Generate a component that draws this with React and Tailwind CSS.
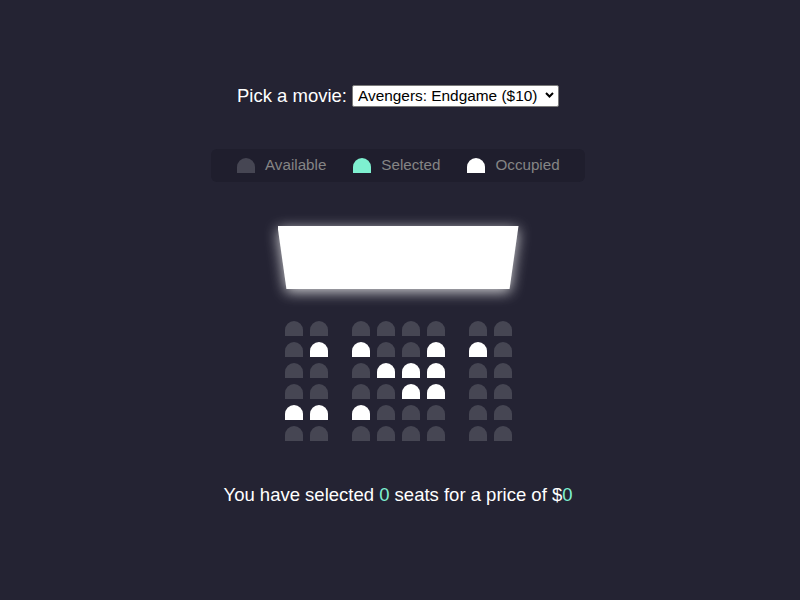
import { useState } from "react";

const occupied = [
  [],
  [1, 2, 5, 6],
  [3, 4, 5],
  [4, 5],
  [0, 1, 2],
  [],
];

function Seat({ state }) {
  const color =
    state === "occupied" ? "bg-white" : state === "selected" ? "bg-[#7ef0d0]" : "bg-[#464653]";
  return <div className={`h-[15px] w-[18px] rounded-t-[10px] ${color}`} />;
}

function SeatRow({ taken }) {
  const cols = [0, 1, 2, 3, 4, 5, 6, 7];
  const seat = (i) => <Seat key={i} state={taken.includes(i) ? "occupied" : "available"} />;
  return (
    <div className="flex gap-[24px]">
      <div className="flex gap-[7px]">{cols.slice(0, 2).map(seat)}</div>
      <div className="flex gap-[7px]">{cols.slice(2, 6).map(seat)}</div>
      <div className="flex gap-[7px]">{cols.slice(6, 8).map(seat)}</div>
    </div>
  );
}

export default function App() {
  const [movie, setMovie] = useState("10");

  return (
    <div className="flex min-h-[600px] flex-col items-center bg-[#242333] pr-[4px] pt-[85px] font-['Liberation_Sans',Arial,sans-serif] text-white">
      <div className="flex h-[22px] items-center gap-[5px]">
        <label className="text-[18.5px] leading-[22px]">Pick a movie:</label>
        <div className="relative">
          <select
            value={movie}
            onChange={(e) => setMovie(e.target.value)}
            className="h-[22px] w-[207px] appearance-none rounded-[2px] border border-[#7a7a7a] bg-white pl-[5px] text-[15.4px] leading-[20px] text-black outline-none"
          >
            <option value="10">Avengers: Endgame ($10)</option>
            <option value="12">Joker ($12)</option>
            <option value="8">Toy Story 4 ($8)</option>
            <option value="9">The Lion King ($9)</option>
          </select>
          <svg
            className="pointer-events-none absolute right-[5px] top-[8px]"
            width="9"
            height="6"
            viewBox="0 0 9 6"
            fill="none"
          >
            <path d="M1 1l3.5 3.5L8 1" stroke="#000" strokeWidth="2" />
          </svg>
        </div>
      </div>

      <ul className="mt-[42px] flex h-[33px] w-[374px] items-center gap-[27px] rounded-[6px] bg-[#1f1e2d] px-[26px] text-[15.2px] text-[#858585]">
        <li className="flex items-center gap-[10px]">
          <Seat state="available" />
          <small className="text-[15.2px]">Available</small>
        </li>
        <li className="flex items-center gap-[10px]">
          <Seat state="selected" />
          <small className="text-[15.2px]">Selected</small>
        </li>
        <li className="flex items-center gap-[10px]">
          <Seat state="occupied" />
          <small className="text-[15.2px]">Occupied</small>
        </li>
      </ul>

      <div className="mt-[44px] drop-shadow-[0_3px_7px_rgba(255,255,255,0.8)]">
        <div className="h-[63px] w-[241px] bg-white [clip-path:polygon(0_0,100%_0,96.3%_100%,3.7%_100%)]" />
      </div>

      <div className="mt-[32px] flex flex-col gap-[6px]">
        {occupied.map((taken, i) => (
          <SeatRow key={i} taken={taken} />
        ))}
      </div>

      <p className="mt-[43px] text-[18.5px] leading-[22px]">
        You have selected <span className="text-[#7ef0d0]">0</span> seats for a price of $
        <span className="text-[#7ef0d0]">0</span>
      </p>
    </div>
  );
}
